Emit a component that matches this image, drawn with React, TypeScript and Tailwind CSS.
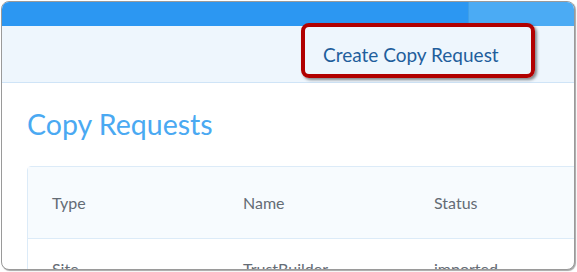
import React from 'react';

const rows = [{ type: 'Site', name: 'TrustBuilder', status: 'imported' }];

const App: React.FC = () => {
  return (
    <div className="w-[577px] h-[272px] bg-white relative overflow-hidden" style={{ fontFamily: 'Lato, "Open Sans", sans-serif' }}>
      <div className="ml-[1px] mt-[1px] w-[574px] h-[269px] rounded-[8px] border border-[#9a9a9a] shadow-[1px_1px_1px_rgba(0,0,0,0.35)] overflow-hidden flex flex-col bg-white">
        {/* top bar */}
        <div className="h-[24px] flex shrink-0">
          <div className="flex-1 bg-[#2c97f2]" />
          <div className="w-[106px] bg-[#4babf4] border-l border-[#3f9fe8]" />
        </div>

        {/* action bar */}
        <div className="h-[57px] shrink-0 bg-[#eef6fd] border-b border-[#cfe4f7] flex items-center pl-[321px]">
          <span className="text-[19px] text-[#1f5e9c] leading-none">Create Copy Request</span>
        </div>

        {/* content */}
        <div className="pl-[25px]">
          <h1 className="mt-[23px] text-[28.5px] leading-[36px] text-[#4aa9f2]">Copy Requests</h1>

          <div className="mt-[24px] w-[600px] border border-[#dcebf8] rounded-[4px]">
            <div className="h-[72px] bg-[#f7fbfe] border-b border-[#dcebf8] flex items-center text-[16px] text-[#646c75]">
              <div className="w-[191px] pl-[24px]">Type</div>
              <div className="w-[191px] pl-[24px]">Name</div>
              <div className="w-[191px] pl-[24px]">Status</div>
            </div>
            {rows.map((r) => (
              <div key={r.name} className="h-[60px] flex items-center text-[16px] text-[#646c75]">
                <div className="w-[191px] pl-[24px]">{r.type}</div>
                <div className="w-[191px] pl-[24px]">{r.name}</div>
                <div className="w-[191px] pl-[24px]">{r.status}</div>
              </div>
            ))}
          </div>
        </div>
      </div>

      {/* annotation highlight */}
      <div className="absolute left-[301px] top-[23px] w-[234px] h-[55px] rounded-[8px] border-[4px] border-[#b10000] shadow-[2px_2px_3px_rgba(0,0,0,0.45)]" />
    </div>
  );
};

export default App;
